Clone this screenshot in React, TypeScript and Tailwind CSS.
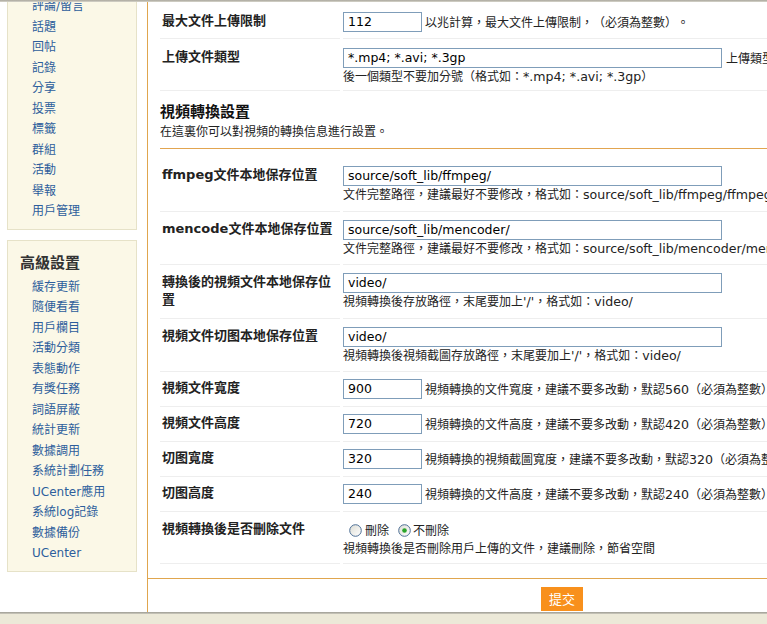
import React from "react"

const basicLinks = ["評論/留言", "話題", "回帖", "記錄", "分享", "投票", "標籤", "群組", "活動", "舉報", "用戶管理"]

const advancedLinks = [
  "緩存更新",
  "隨便看看",
  "用戶欄目",
  "活動分類",
  "表態動作",
  "有獎任務",
  "詞語屏蔽",
  "統計更新",
  "數據調用",
  "系統計劃任務",
  "UCenter應用",
  "系統log記錄",
  "數據備份",
  "UCenter",
]

// latin runs get a wider font, the rest stays on the CJK face
function T({ children }: { children: string }) {
  const parts = children.split(/([\x20-\x7e]+)/)
  return (
    <>
      {parts.map((p, i) =>
        i % 2 === 1 ? (
          <span key={i} className="font-['DejaVu_Sans',sans-serif] text-[12.6px]">
            {p}
          </span>
        ) : (
          p
        )
      )}
    </>
  )
}

function Radio({ checked }: { checked?: boolean }) {
  const id = checked ? "rg1" : "rg0"
  return (
    <svg width="13" height="13" viewBox="0 0 13 13" className="shrink-0">
      <defs>
        <linearGradient id={id} x1="0" y1="0" x2="1" y2="1">
          <stop offset="0" stopColor="#dcdcd4" />
          <stop offset="1" stopColor="#ffffff" />
        </linearGradient>
      </defs>
      <circle cx="6.5" cy="6.5" r="5.8" fill={`url(#${id})`} stroke="#4d6f96" strokeWidth="1" />
      {checked && <circle cx="6.5" cy="6.5" r="2.3" fill="#2aa52a" />}
    </svg>
  )
}

function Input({ value, wide }: { value: string; wide?: boolean }) {
  return (
    <div
      className={`${wide ? "w-[379px]" : "w-[79px]"} h-[20px] shrink-0 overflow-hidden border border-[#7f9db9] bg-white pl-[4px] font-['DejaVu_Sans',sans-serif] text-[12.5px] leading-[18px] text-black`}
    >
      {value}
    </div>
  )
}

function Row({
  label,
  children,
  pt = "pt-[8px]",
  pb = "pb-[9px]",
}: {
  label: string
  children: React.ReactNode
  pt?: string
  pb?: string
}) {
  return (
    <div className="grid grid-cols-[180px_1fr] gap-x-[3px]">
      <div
        className={`${pt} ${pb} border-b border-[#eeeeee] pl-[2px] pr-[4px] font-['DejaVu_Sans','Noto_Sans_CJK_TC',sans-serif] text-[13px] font-bold leading-[18px] text-[#222]`}
      >
        {label}
      </div>
      <div className={`${pt} ${pb} border-b border-[#eeeeee] whitespace-nowrap text-[12px] text-[#222]`}>{children}</div>
    </div>
  )
}

function Inline({ value, text }: { value: string; text: string }) {
  return (
    <div className="flex h-[20px] items-center gap-[3px]">
      <Input value={value} />
      <span className="flex h-[20px] items-center leading-[20px]">
        <span>
          <T>{text}</T>
        </span>
      </span>
    </div>
  )
}

function Help({ text }: { text: string }) {
  return (
    <div className="flex h-[15px] items-center">
      <span className="leading-[15px]">
        <T>{text}</T>
      </span>
    </div>
  )
}

export default function App() {
  return (
    <div className="flex h-[624px] w-[767px] flex-col overflow-hidden bg-white font-['Noto_Sans_CJK_TC','DejaVu_Sans',sans-serif] [text-spacing-trim:space-all]">
      <div className="h-[2px] shrink-0 bg-gradient-to-b from-[#a9a69c] to-[#d8d6cc]" />

      <div className="flex h-[610px] shrink-0">
        {/* sidebar */}
        <div className="w-[147px] shrink-0 overflow-hidden pl-[7px] font-['DejaVu_Sans','Noto_Sans_CJK_TC',sans-serif]">
          <div className="-mt-[15px] w-[130px] border border-[#e6e2c8] bg-[#fbf8e7] pb-[7px] pl-[24px] pt-[8px]">
            {basicLinks.map((l) => (
              <div key={l} className="text-[12px] leading-[20.5px] text-[#2d5e9c]">
                {l}
              </div>
            ))}
          </div>
          <div className="mt-[10px] w-[130px] border border-[#e6e2c8] bg-[#fbf8e7] pb-[7px] pt-[12px]">
            <div className="mb-[4px] pl-[12px] text-[15px] font-semibold leading-[20px] text-[#333]">高級設置</div>
            {advancedLinks.map((l) => (
              <div key={l} className="pl-[24px] text-[12px] leading-[20.5px] text-[#2d5e9c]">
                {l}
              </div>
            ))}
          </div>
        </div>

        {/* main */}
        <div className="min-w-0 flex-1 overflow-hidden border-l border-[#e0a64e]">
          <div className="pl-[12px]">
            <Row label="最大文件上傳限制" pt="pt-[10px]" pb="pb-[6px]">
              <Inline value="112" text="以兆計算，最大文件上傳限制，（必須為整數）。" />
            </Row>
            <Row label="上傳文件類型" pt="pt-[9px]" pb="pb-[7px]">
              <div className="flex h-[20px] items-center gap-[4px]">
                <Input value="*.mp4; *.avi; *.3gp" wide />
                <span className="leading-[20px]">上傳類型，多個類型用分號隔開，最</span>
              </div>
              <Help text="後一個類型不要加分號（格式如：*.mp4; *.avi; *.3gp）" />
            </Row>

            <div className="border-b border-[#e2a550] pb-[9px] pt-[10px]">
              <div className="h-[20px] text-[15px] font-bold leading-[20px] text-[#111]">視頻轉換設置</div>
              <div className="mt-[2px] h-[16px] text-[12px] leading-[16px] text-[#222]">在這裏你可以對視頻的轉換信息進行設置。</div>
            </div>

            <Row label="ffmpeg文件本地保存位置" pt="pt-[17px]" pb="pb-[10px]">
              <Input value="source/soft_lib/ffmpeg/" wide />
              <Help text="文件完整路徑，建議最好不要修改，格式如：source/soft_lib/ffmpeg/ffmpeg.exe" />
            </Row>
            <Row label="mencode文件本地保存位置">
              <Input value="source/soft_lib/mencoder/" wide />
              <Help text="文件完整路徑，建議最好不要修改，格式如：source/soft_lib/mencoder/mencoder.exe" />
            </Row>
            <Row label="轉換後的視頻文件本地保存位置">
              <Input value="video/" wide />
              <Help text="視頻轉換後存放路徑，末尾要加上'/'，格式如：video/" />
            </Row>
            <Row label="視頻文件切图本地保存位置">
              <Input value="video/" wide />
              <Help text="視頻轉換後視頻截圖存放路徑，末尾要加上'/'，格式如：video/" />
            </Row>
            <Row label="視頻文件寬度" pt="pt-[7px]" pb="pb-[7px]">
              <Inline value="900" text="視頻轉換的文件寬度，建議不要多改動，默認560（必須為整數）" />
            </Row>
            <Row label="視頻文件高度" pt="pt-[7px]" pb="pb-[7px]">
              <Inline value="720" text="視頻轉換的文件高度，建議不要多改動，默認420（必須為整數）" />
            </Row>
            <Row label="切图寬度" pt="pt-[7px]" pb="pb-[7px]">
              <Inline value="320" text="視頻轉換的視頻截圖寬度，建議不要多改動，默認320（必須為整數）" />
            </Row>
            <Row label="切图高度" pt="pt-[7px]" pb="pb-[7px]">
              <Inline value="240" text="視頻轉換的文件高度，建議不要多改動，默認240（必須為整數）" />
            </Row>
            <Row label="視頻轉換後是否刪除文件" pt="pt-[8px]" pb="pb-[8px]">
              <div className="flex h-[20px] items-center pl-[6px]">
                <Radio />
                <span className="ml-[3px] mr-[9px] leading-[20px]">刪除</span>
                <Radio checked />
                <span className="ml-[2px] leading-[20px]">不刪除</span>
              </div>
              <Help text="視頻轉換後是否刪除用戶上傳的文件，建議刪除，節省空間" />
            </Row>
          </div>

          <div className="mt-[14px] border-t border-[#e0a64e] pl-[393px] pt-[6px]">
            <button className="h-[24px] w-[42px] bg-[#f8901c] text-[13px] leading-[24px] text-white">提交</button>
          </div>
        </div>
      </div>

      <div className="h-[12px] shrink-0 bg-[#ece9d8]">
        <div className="h-[2px] bg-gradient-to-b from-[#9c9b92] to-[#cfccc0]" />
      </div>
    </div>
  )
}
